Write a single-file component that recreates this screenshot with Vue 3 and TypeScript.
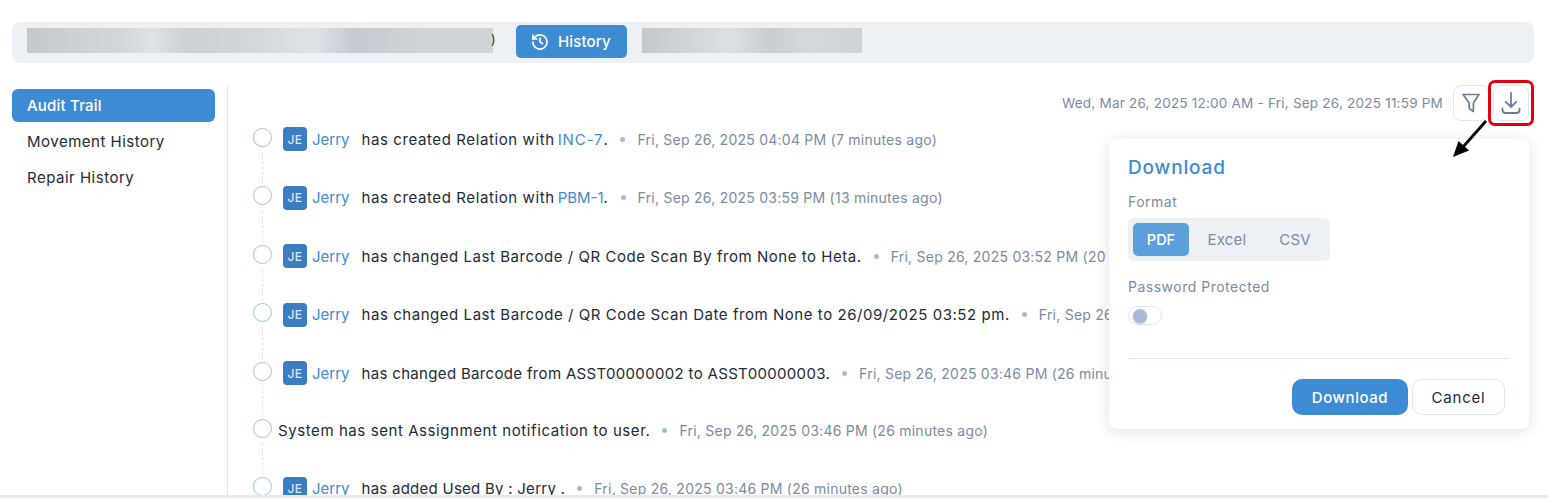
<script setup lang="ts">
interface Seg { t: string; link?: boolean; ls?: number }
interface Row { user: boolean; segs: Seg[]; time: string; ls: number }
const rows: Row[] = [
  { user: true, ls: 0.6, segs: [{ t: 'has created Relation with' }, { t: 'INC-7', link: true, ls: 0.9 }, { t: '.' }], time: 'Fri, Sep 26, 2025 04:04 PM (7 minutes ago)' },
  { user: true, ls: 0.6, segs: [{ t: 'has created Relation with' }, { t: 'PBM-1', link: true, ls: 0 }, { t: '.' }], time: 'Fri, Sep 26, 2025 03:59 PM (13 minutes ago)' },
  { user: true, ls: 0.54, segs: [{ t: 'has changed Last Barcode / QR Code Scan By from None to Heta.' }], time: 'Fri, Sep 26, 2025 03:52 PM (20 minutes ago)' },
  { user: true, ls: 0.55, segs: [{ t: 'has changed Last Barcode / QR Code Scan Date from None to 26/09/2025 03:52 pm.' }], time: 'Fri, Sep 26, 2025 03:52 PM (20 minutes ago)' },
  { user: true, ls: 0.33, segs: [{ t: 'has changed Barcode from ASST00000002 to ASST00000003.' }], time: 'Fri, Sep 26, 2025 03:46 PM (26 minutes ago)' },
  { user: false, ls: 0.58, segs: [{ t: 'System has sent Assignment notification to user.' }], time: 'Fri, Sep 26, 2025 03:46 PM (26 minutes ago)' },
  { user: true, ls: 0.26, segs: [{ t: 'has added Used By : Jerry .' }], time: 'Fri, Sep 26, 2025 03:46 PM (26 minutes ago)' },
]
const menu = ['Audit Trail', 'Movement History', 'Repair History']
const formats = ['PDF', 'Excel', 'CSV']
</script>

<template>
  <div class="page">
    <header class="topbar">
      <div class="blur blur-a"></div>
      <span class="paren">)</span>
      <button class="history">
        <svg width="20" height="20" viewBox="0 0 24 24" fill="none" stroke="#fff" stroke-width="2" stroke-linecap="round" stroke-linejoin="round">
          <path d="M3.5 12a8.5 8.5 0 1 0 2.6-6.1L3.5 8.4" />
          <path d="M3.5 3.8v4.6h4.6" />
          <path d="M12 7.5V12l3 2" />
        </svg>
        History
      </button>
      <div class="blur blur-b"></div>
    </header>

    <div class="body">
      <nav class="side">
        <a v-for="(m, i) in menu" :key="m" class="side-item" :class="{ active: i === 0 }">{{ m }}</a>
      </nav>
      <main class="main">
        <div class="toolbar">
          <span class="range">Wed, Mar 26, 2025 12:00 AM - Fri, Sep 26, 2025 11:59 PM</span>
          <button class="icon-btn">
            <svg width="22" height="22" viewBox="0 0 22 22" fill="none" stroke="#6a7d98" stroke-width="1.7" stroke-linejoin="round">
              <path d="M3 2.5h16L13.4 11v8.5L9.2 16.6V11Z" />
            </svg>
          </button>
          <button class="icon-btn">
            <svg width="22" height="24" viewBox="0 0 22 24" fill="none" stroke="#6a7d98" stroke-width="1.8" stroke-linecap="round" stroke-linejoin="round">
              <path d="M11 2v13.5M5.8 10.8 11 16l5.2-5.2" />
              <path d="M2.5 17.5v1.5a3 3 0 0 0 3 3h11a3 3 0 0 0 3-3v-1.5" />
            </svg>
          </button>
        </div>
        <ul class="timeline">
          <li v-for="(r, i) in rows" :key="i" class="row" :class="{ 'sys-row': !r.user }">
            <span class="dot"></span>
            <template v-if="r.user">
              <span class="avatar">JE</span>
              <span class="user">Jerry</span>
            </template>
            <span class="msg" :class="{ sys: !r.user }" :style="{ letterSpacing: r.ls + 'px' }">
              <template v-for="s in r.segs" :key="s.t"><span :class="{ link: s.link }" :style="s.ls !== undefined ? { letterSpacing: s.ls + 'px' } : undefined">{{ s.t }}</span></template>
            </span>
            <span class="sep"></span>
            <span class="time">{{ r.time }}</span>
          </li>
        </ul>
      </main>
    </div>

    <section class="pop">
      <h3 class="pop-title">Download</h3>
      <div class="label">Format</div>
      <div class="seg">
        <span v-for="(f, i) in formats" :key="f" class="seg-item" :class="{ on: i === 0 }">{{ f }}</span>
      </div>
      <div class="label pw">Password Protected</div>
      <span class="toggle"><span class="knob"></span></span>
      <hr class="rule" />
      <div class="actions">
        <button class="btn primary">Download</button>
        <button class="btn ghost">Cancel</button>
      </div>
    </section>

    <div class="highlight"></div>
    <svg class="arrow" width="40" height="42" viewBox="0 0 40 42">
      <path d="M35 1 12 27" stroke="#000" stroke-width="2.8" />
      <path d="M2 37 7.5 21 18 30.5Z" fill="#000" />
    </svg>
  </div>
</template>

<style>
html, body { margin: 0; background: #fff; overflow: hidden; }
</style>

<style scoped>
.page {
  position: relative;
  width: 1548px;
  height: 498px;
  box-sizing: border-box;
  padding: 22px 14px 0 12px;
  overflow: hidden;
  font-family: Inter, "Noto Sans", sans-serif;
  font-size: 14px;
  color: #1f2937;
  border-bottom: 3px solid #e8eaed;
}
.topbar {
  display: flex;
  align-items: center;
  height: 41px;
  box-sizing: border-box;
  padding: 0 0 2px 15px;
  background: #edf0f5;
  border-radius: 8px;
}
.blur { height: 25px; margin-bottom: 2px; }
.blur-a {
  width: 466px;
  background: linear-gradient(90deg, #c4c8cd 0%, #ced2d6 12%, #d2d6da 20%, #dfe3e8 27%, #ccd0d4 34%, #d3d7db 48%, #dfe3e8 62%, #c6cad0 70%, #d0d4d8 85%, #d2d5d8 100%);
}
.paren { width: 25px; margin-left: -2px; font-size: 13px; color: #333; line-height: 25px; margin-bottom: 4px; }
.blur-b {
  width: 220px;
  margin-left: 15px;
  background: linear-gradient(90deg, #c4c7cc 0%, #d3d6da 25%, #dde0e4 40%, #c9ccd1 58%, #d5d8dc 75%, #cfd2d6 100%);
}
.history {
  display: flex;
  align-items: center;
  gap: 8px;
  width: 111px;
  height: 33px;
  box-sizing: border-box;
  padding: 0 0 0 14px;
  border: 0;
  border-radius: 5px;
  background: #3d8bd3;
  color: #fff;
  font: 500 15px Inter, sans-serif;
  letter-spacing: 0.15px;
}
.body { display: flex; margin-top: 22px; height: 411px; }
.side { width: 203px; margin-right: 12px; padding-top: 4px; flex: none; }
.side-item {
  display: block;
  height: 33px;
  line-height: 33px;
  margin-bottom: 3px;
  padding-left: 15px;
  border-radius: 6px;
  font-size: 15px;
  letter-spacing: 0.5px;
  color: #222b38;
}
.side-item.active { background: #3d8bd3; color: #fff; font-weight: 500; letter-spacing: 0.2px; }
.main { flex: 1; border-left: 1px solid #dfe5ee; padding-left: 25px; position: relative; }
.toolbar {
  display: flex;
  justify-content: flex-end;
  align-items: center;
  height: 36px;
  gap: 4px;
  padding-right: 5px;
}
.range { color: #7b8ba3; font-size: 13.5px; letter-spacing: 0.22px; margin-right: 6px; }
.icon-btn {
  width: 36px;
  height: 36px;
  padding: 0;
  display: grid;
  place-items: center;
  border: 1px solid #dfe5ee;
  border-radius: 8px;
  background: #fff;
}
.timeline { list-style: none; margin: 0; padding: 0; }
.row {
  position: relative;
  display: flex;
  align-items: center;
  height: 22px;
  margin-top: 36.6px;
  white-space: nowrap;
}
.row:first-child { margin-top: 7px; }
.row.sys-row { margin-top: 35px; }
.row:not(:last-child)::after {
  content: "";
  position: absolute;
  left: 9px;
  top: 24px;
  height: 32px;
  border-left: 1px dashed #dfe5ee;
}
.dot {
  width: 17px;
  height: 17px;
  border: 1.5px solid #a9bfd9;
  border-radius: 50%;
  background: #fff;
  flex: none;
  margin-right: 11px;
  position: relative;
  top: -2px;
}
.avatar {
  width: 24px;
  height: 24px;
  border-radius: 4px;
  background: #3a7dc0;
  color: #dbe8f5;
  font-size: 12px;
  font-weight: 500;
  letter-spacing: 0.4px;
  display: grid;
  place-items: center;
  flex: none;
  margin-right: 5px;
}
.user { color: #3d8bd3; font-size: 15px; margin-right: 12px; }
.msg { color: #222b38; font-size: 15px; }
.msg.sys { margin-left: -5px; }
.link { color: #3d8bd3; margin-left: 3px; }
.sep { width: 5px; height: 5px; border-radius: 50%; background: #a9bad0; margin: 0 12px; flex: none; }
.time { color: #7b8ba3; font-size: 14px; letter-spacing: 0.24px; }
.highlight {
  position: absolute;
  left: 1488px;
  top: 80px;
  width: 46px;
  height: 46px;
  box-sizing: border-box;
  border: 3px solid #e3000f;
  border-radius: 7px;
}
.arrow { position: absolute; left: 1451px; top: 120px; }
.pop {
  position: absolute;
  left: 1109px;
  top: 139px;
  width: 420px;
  height: 290px;
  box-sizing: border-box;
  padding: 16px 19px 0;
  background: #fff;
  border-radius: 8px;
  box-shadow: 0 2px 14px rgba(60, 70, 90, 0.16);
}
.pop-title { margin: 0; font-size: 19px; font-weight: 500; letter-spacing: 0.85px; color: #3d8bd3; line-height: 26px; }
.label { color: #7b8ba3; font-size: 14px; letter-spacing: 0.5px; line-height: 20px; margin-top: 11px; }
.seg {
  display: flex;
  width: 202px;
  height: 43px;
  margin-top: 6px;
  box-sizing: border-box;
  padding: 5px 0 5px 5px;
  background: #edf0f5;
  border-radius: 6px;
}
.seg-item {
  width: 68px;
  flex: none;
  display: grid;
  place-items: center;
  color: #7b8ba3;
  font-size: 15px;
  letter-spacing: 0.2px;
}
.seg-item.on { width: 56px; margin-right: 4px; background: #5b9fdb; color: #fff; font-weight: 500; font-size: 14.5px; letter-spacing: 0; border-radius: 5px; }
.label.pw { margin-top: 16px; }
.toggle {
  display: block;
  width: 34px;
  height: 19px;
  margin-top: 9px;
  box-sizing: border-box;
  border: 1px solid #dfe5ee;
  border-radius: 10px;
  position: relative;
}
.knob {
  position: absolute;
  left: 4px;
  top: 2px;
  width: 14px;
  height: 14px;
  border-radius: 50%;
  background: #a9bad6;
  box-shadow: 0 1px 2px rgba(0, 0, 0, 0.25);
}
.rule { border: 0; border-top: 1px solid #dfe5ee; margin: 33px 0 0; }
.actions { display: flex; justify-content: flex-end; gap: 4px; margin-top: 20px; padding-right: 5px; }
.btn { height: 36px; border-radius: 10px; font: 500 15px Inter, sans-serif; padding: 0; letter-spacing: 0.55px; }
.btn.primary { width: 116px; background: #3d8bd3; color: #fff; border: 0; }
.btn.ghost { width: 93px; background: #fff; color: #222b38; border: 1px solid #dfe5ee; font-weight: 400; letter-spacing: 0.8px; }
</style>
